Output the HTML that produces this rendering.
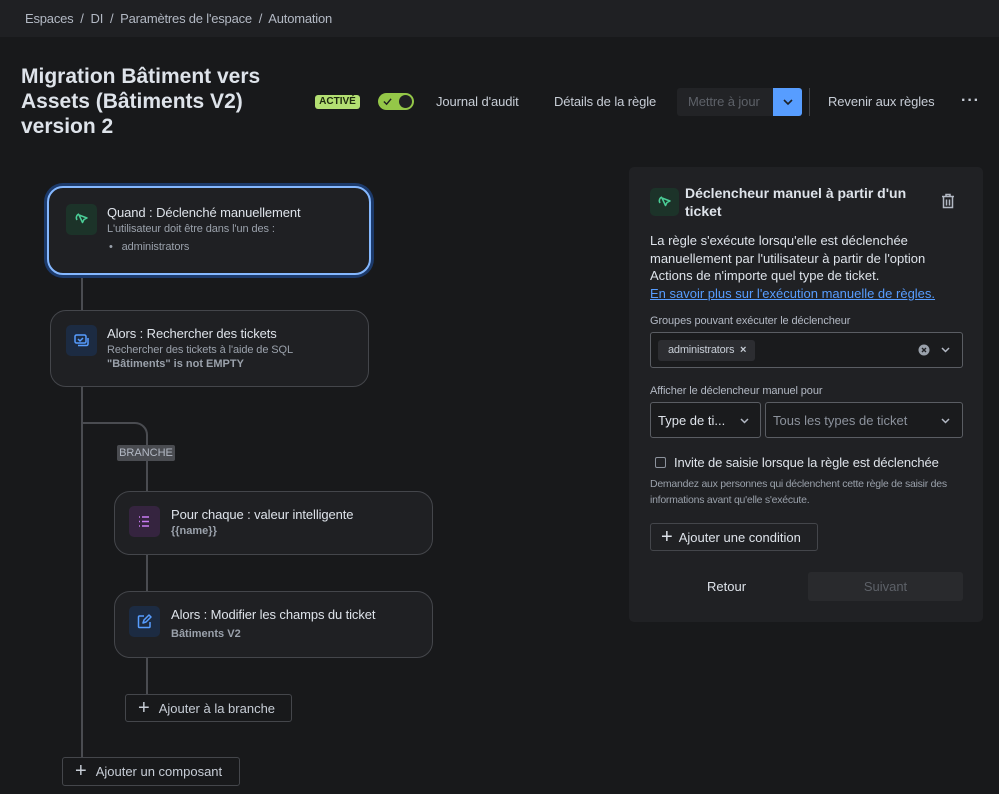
<!DOCTYPE html>
<html><head><meta charset="utf-8"><style>
*{box-sizing:border-box;margin:0;padding:0}
body{width:999px;height:794px;background:#18191b;font-family:"Liberation Sans",sans-serif;color:#c7cdd6;position:relative;overflow:hidden}
.a{position:absolute;white-space:nowrap}
.top{position:absolute;left:0;top:0;width:999px;height:37px;background:#1f2023}
.card{position:absolute;background:#1f2023;border:1px solid #44464b;border-radius:16px}
.ic{position:absolute;width:31px;height:31px;border-radius:5px}
.t{font-size:13px;color:#dee3ea;letter-spacing:-0.1px}
.s{font-size:11px;color:#9aa1ab;letter-spacing:-0.1px}
.b{font-size:11px;color:#9aa1ab;font-weight:bold}
.ln{position:absolute;background:#4a4c51;width:2px}
.btn{position:absolute;border:1px solid #44464b;border-radius:3px;font-size:13px;color:#c7cdd6;display:flex;align-items:center;background:#18191b}
.sel{position:absolute;border:1px solid #5a5d63;border-radius:3px;background:#1a1b1d}
</style></head><body>
<div class="top"></div>
<div class="a" style="left:25px;top:11px;font-size:13px;color:#b3b9c4;letter-spacing:-0.2px">Espaces &nbsp;/&nbsp; DI &nbsp;/&nbsp; Paramètres de l'espace &nbsp;/&nbsp; Automation</div>
<div class="a" style="left:21px;top:64px;font-size:21px;font-weight:bold;line-height:25px;color:#dee3ea">Migration Bâtiment vers<br>Assets (Bâtiments V2)<br>version 2</div>
<div class="a" style="left:315px;top:95px;width:45px;height:14px;background:#b3df72;border-radius:3px;color:#1f2b10;font-size:10px;font-weight:bold;text-align:center;line-height:14px">ACTIVÉ</div>
<div class="a" style="left:378px;top:93px;width:36px;height:17px;background:#94c748;border-radius:9px"><div style="position:absolute;right:2px;top:2px;width:13px;height:13px;border-radius:50%;background:#1f2023"></div><svg style="position:absolute;left:5px;top:4px" width="9" height="9" viewBox="0 0 10 10"><path d="M1 5l3 3 5-6" stroke="#1f2023" stroke-width="1.6" fill="none"/></svg></div>
<div class="a" style="left:436px;top:94px;font-size:13px;letter-spacing:-0.1px">Journal d'audit</div>
<div class="a" style="left:554px;top:94px;font-size:13px;letter-spacing:-0.1px">Détails de la règle</div>
<div class="a" style="left:677px;top:88px;width:96px;height:28px;background:#222326;border-radius:3px 0 0 3px;font-size:13px;color:#5d6168;line-height:28px;padding-left:11px;letter-spacing:-0.1px">Mettre à jour</div>
<div class="a" style="left:773px;top:88px;width:29px;height:28px;background:#579dff;border-radius:0 3px 3px 0"><svg style="position:absolute;left:10px;top:11px" width="10" height="7" viewBox="0 0 10 7"><path d="M1 1l4 4 4-4" stroke="#1d2125" stroke-width="1.6" fill="none"/></svg></div>
<div class="a" style="left:809px;top:88px;width:1px;height:28px;background:#44464b"></div>
<div class="a" style="left:828px;top:94px;font-size:13px;letter-spacing:-0.1px">Revenir aux règles</div>
<div class="a" style="left:961px;top:92px;font-size:16px;font-weight:bold;letter-spacing:1px">···</div>

<div class="ln" style="left:81px;top:273px;height:38px"></div>
<div class="ln" style="left:81px;top:387px;height:380px"></div>
<svg class="a" style="left:80px;top:421px" width="70" height="30"><path d="M2 2H55a12 12 0 0 1 12 12V30" stroke="#4a4c51" stroke-width="2" fill="none"/></svg>
<div class="a" style="left:117px;top:445px;width:58px;height:16px;background:#4a4c51;border-radius:2px;font-size:11px;color:#b3b9c4;text-align:center;line-height:16px">BRANCHE</div>
<div class="ln" style="left:146px;top:461px;height:31px"></div>
<div class="ln" style="left:146px;top:554px;height:38px"></div>
<div class="ln" style="left:146px;top:657px;height:38px"></div>

<div class="card" style="left:47px;top:186px;width:324px;height:89px;border:2px solid #85b8ff;box-shadow:0 0 0 3px #1c3a6b;background:#1f2023"></div>
<div class="ic" style="left:66px;top:204px;background:#1c3329"><svg width="31" height="31" viewBox="0 0 31 31"><path d="M13 11l8 3-3 1.5 -1.5 3z M11 16a4 4 0 0 1 2-6" stroke="#4bce97" stroke-width="1.5" fill="none" stroke-linejoin="round"/></svg></div>
<div class="a t" style="left:107px;top:205px">Quand : Déclenché manuellement</div>
<div class="a s" style="left:107px;top:223px">L'utilisateur doit être dans l'un des :</div>
<div class="a s" style="left:109px;top:241px">•&nbsp;&nbsp;&nbsp;administrators</div>
<div class="card" style="left:50px;top:310px;width:319px;height:77px"></div>
<div class="ic" style="left:66px;top:325px;background:#1c2b42"><svg width="31" height="31" viewBox="0 0 31 31"><rect x="9" y="10" width="11" height="8" rx="1.5" stroke="#579dff" stroke-width="1.5" fill="none"/><path d="M12 14l2 2 3-3M22 13v6a1.5 1.5 0 0 1-1.5 1.5H12" stroke="#579dff" stroke-width="1.5" fill="none"/></svg></div>
<div class="a t" style="left:107px;top:326px">Alors : Rechercher des tickets</div>
<div class="a s" style="left:107px;top:344px">Rechercher des tickets à l'aide de SQL</div>
<div class="a b" style="left:107px;top:358px">"Bâtiments" is not EMPTY</div>
<div class="card" style="left:114px;top:491px;width:319px;height:64px"></div>
<div class="ic" style="left:129px;top:506px;background:#35243f"><svg width="31" height="31" viewBox="0 0 31 31"><path d="M13 11h7M13 15.5h7M13 20h7M10 11h1M10 15.5h1M10 20h1" stroke="#c97cf4" stroke-width="1.6"/></svg></div>
<div class="a t" style="left:171px;top:507px">Pour chaque : valeur intelligente</div>
<div class="a b" style="left:171px;top:525px">{{name}}</div>
<div class="card" style="left:114px;top:591px;width:319px;height:67px"></div>
<div class="ic" style="left:129px;top:606px;background:#1c2b42"><svg width="31" height="31" viewBox="0 0 31 31"><path d="M15 10h-4.5a1 1 0 0 0-1 1v9.5a1 1 0 0 0 1 1H20a1 1 0 0 0 1-1V16M14 17l1-3 5-5 2 2-5 5z" stroke="#579dff" stroke-width="1.5" fill="none" stroke-linejoin="round"/></svg></div>
<div class="a t" style="left:171px;top:607px">Alors : Modifier les champs du ticket</div>
<div class="a b" style="left:171px;top:628px">Bâtiments V2</div>

<div class="btn" style="left:125px;top:694px;width:167px;height:28px;padding-left:12px"><span style="font-size:20px;font-weight:300;margin-right:9px">+</span>Ajouter à la branche</div>
<div class="btn" style="left:62px;top:757px;width:178px;height:29px;padding-left:12px"><span style="font-size:20px;font-weight:300;margin-right:9px">+</span>Ajouter un composant</div>

<div class="a" style="left:629px;top:167px;width:354px;height:455px;background:#202124;border-radius:5px"></div>
<div class="ic" style="left:650px;top:188px;width:29px;height:28px;background:#1c3329"><svg width="29" height="28" viewBox="0 0 29 28"><path d="M12 10l8 3-3 1.5-1.5 3z M10 15a4 4 0 0 1 2-6" stroke="#4bce97" stroke-width="1.5" fill="none" stroke-linejoin="round"/></svg></div>
<div class="a" style="left:685px;top:184px;font-size:14px;font-weight:bold;line-height:18px;color:#dee3ea">Déclencheur manuel à partir d'un<br>ticket</div>
<svg class="a" style="left:941px;top:193px" width="14" height="16" viewBox="0 0 14 16"><path d="M1 3.5h12M5 3V1.5h4V3M2.5 4v10.5h9V4M5.5 6.5v6M8.5 6.5v6" stroke="#b3b9c4" stroke-width="1.5" fill="none"/></svg>
<div class="a" style="left:650px;top:232px;font-size:13px;line-height:17.7px;color:#dee3ea">La règle s'exécute lorsqu'elle est déclenchée<br>manuellement par l'utilisateur à partir de l'option<br>Actions de n'importe quel type de ticket.<br><span style="color:#579dff;text-decoration:underline">En savoir plus sur l'exécution manuelle de règles.</span></div>
<div class="a s" style="left:650px;top:315px;color:#b3b9c4">Groupes pouvant exécuter le déclencheur</div>
<div class="sel" style="left:650px;top:332px;width:313px;height:36px"></div>
<div class="a" style="left:658px;top:340px;width:97px;height:21px;background:#2c2d31;border-radius:3px;font-size:11px;color:#c7cdd6;line-height:21px;padding-left:10px;letter-spacing:-0.2px">administrators &nbsp;<b>×</b></div>
<svg class="a" style="left:918px;top:344px" width="12" height="12" viewBox="0 0 12 12"><circle cx="6" cy="6" r="5.5" fill="#9aa1ab"/><path d="M4 4l4 4M8 4l-4 4" stroke="#202124" stroke-width="1.4"/></svg>
<svg class="a" style="left:941px;top:347px" width="9" height="6" viewBox="0 0 9 6"><path d="M1 1l3.5 3.5L8 1" stroke="#b3b9c4" stroke-width="1.5" fill="none"/></svg>
<div class="a s" style="left:650px;top:385px;color:#b3b9c4">Afficher le déclencheur manuel pour</div>
<div class="sel" style="left:650px;top:402px;width:111px;height:36px"></div>
<div class="a" style="left:658px;top:413px;font-size:13px;color:#dee3ea">Type de ti...</div>
<svg class="a" style="left:740px;top:418px" width="9" height="6" viewBox="0 0 9 6"><path d="M1 1l3.5 3.5L8 1" stroke="#b3b9c4" stroke-width="1.5" fill="none"/></svg>
<div class="sel" style="left:765px;top:402px;width:198px;height:36px"></div>
<div class="a" style="left:773px;top:413px;font-size:13px;color:#8c929c">Tous les types de ticket</div>
<svg class="a" style="left:941px;top:418px" width="9" height="6" viewBox="0 0 9 6"><path d="M1 1l3.5 3.5L8 1" stroke="#b3b9c4" stroke-width="1.5" fill="none"/></svg>
<div class="a" style="left:655px;top:457px;width:11px;height:11px;border:1.5px solid #8c929c;border-radius:2px"></div>
<div class="a" style="left:674px;top:455px;font-size:13px;color:#dee3ea;letter-spacing:-0.1px">Invite de saisie lorsque la règle est déclenchée</div>
<div class="a s" style="left:650px;top:476px;line-height:16px;font-size:10.5px;letter-spacing:-0.25px">Demandez aux personnes qui déclenchent cette règle de saisir des<br>informations avant qu'elle s'exécute.</div>
<div class="btn" style="left:650px;top:523px;width:168px;height:28px;padding-left:10px;background:#202124;color:#dee3ea"><span style="font-size:20px;font-weight:300;margin-right:6px">+</span>Ajouter une condition</div>
<div class="a" style="left:707px;top:579px;font-size:13px;color:#dee3ea">Retour</div>
<div class="a" style="left:808px;top:572px;width:155px;height:29px;background:#292a2d;border-radius:3px;font-size:13px;color:#5d6168;text-align:center;line-height:29px">Suivant</div>
</body></html>
